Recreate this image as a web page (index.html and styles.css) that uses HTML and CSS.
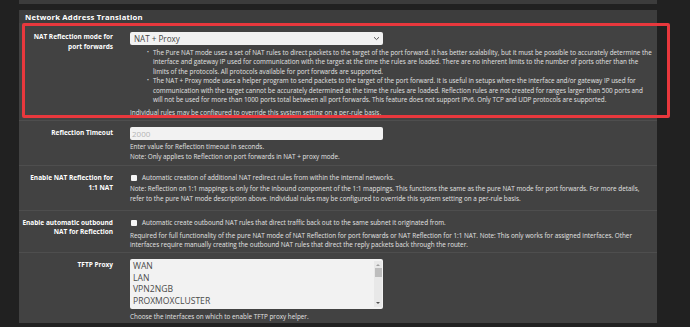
FILE: index.html
```html
<!DOCTYPE html>
<html lang="en">
<head>
    <meta charset="UTF-8">
    <title>Network Address Translation</title>
    <link rel="stylesheet" href="styles.css">
</head>
<body>
    <div class="page">
        <div class="panel panel-prev"></div>

        <div class="panel">
            <div class="panel-heading">Network Address Translation</div>
            <div class="panel-body">

                <div class="form-row row-reflection">
                    <div class="form-label">NAT Reflection mode for<br>port forwards</div>
                    <div class="form-field">
                        <div class="select">
                            <span>NAT + Proxy</span>
                            <svg class="chevron" width="7" height="5" viewBox="0 0 7 5"><path d="M1 1.2 L3.5 3.6 L6 1.2" fill="none" stroke="#555" stroke-width="1"/></svg>
                        </div>
                        <ul class="help-list">
                            <li>The Pure NAT mode uses a set of NAT rules to direct packets to the target of the port forward. It has better scalability, but it must be possible to accurately determine the interface and gateway IP used for communication with the target at the time the rules are loaded. There are no inherent limits to the number of ports other than the<br>limits of the protocols. All protocols available for port forwards are supported.</li>
                            <li>The NAT + Proxy mode uses a helper program to send packets to the target of the port forward. It is useful in setups where the interface and/or gateway IP used for communication with the target cannot be accurately determined at the time the rules are loaded. Reflection rules are not created for ranges larger than 500 ports and<br>will not be used for more than 1000 ports total between all port forwards. This feature does not support IPv6. Only TCP and UDP protocols are supported.</li>
                        </ul>
                        <div class="help help-last">Individual rules may be configured to override this system setting on a per-rule basis.</div>
                    </div>
                    <div class="annotation"></div>
                </div>

                <div class="form-row row-timeout">
                    <div class="form-label">Reflection Timeout</div>
                    <div class="form-field">
                        <div class="input placeholder">2000</div>
                        <div class="help">Enter value for Reflection timeout in seconds.<br>Note: Only applies to Reflection on port forwards in NAT + proxy mode.</div>
                    </div>
                </div>

                <div class="form-row row-onetoone">
                    <div class="form-label">Enable NAT Reflection for<br>1:1 NAT</div>
                    <div class="form-field">
                        <div class="check"><span class="box"></span>Automatic creation of additional NAT redirect rules from within the internal networks.</div>
                        <div class="help">Note: Reflection on 1:1 mappings is only for the inbound component of the 1:1 mappings. This functions the same as the pure NAT mode for port forwards. For more details, refer to the pure NAT mode description above. Individual rules may be configured to override this system setting on a per-rule basis.</div>
                    </div>
                </div>

                <div class="form-row row-outbound">
                    <div class="form-label">Enable automatic outbound<br>NAT for Reflection</div>
                    <div class="form-field">
                        <div class="check"><span class="box"></span>Automatic create outbound NAT rules that direct traffic back out to the same subnet it originated from.</div>
                        <div class="help">Required for full functionality of the pure NAT mode of NAT Reflection for port forwards or NAT Reflection for 1:1 NAT. Note: This only works for assigned interfaces. Other interfaces require manually creating the outbound NAT rules that direct the reply packets back through the router.</div>
                    </div>
                </div>

                <div class="form-row row-tftp">
                    <div class="form-label">TFTP Proxy</div>
                    <div class="form-field">
                        <div class="listbox">
                            <div class="options">
                                <div>WAN</div>
                                <div>LAN</div>
                                <div>VPN2NGB</div>
                                <div>PROXMOXCLUSTER</div>
                            </div>
                            <div class="scrollbar">
                                <span class="arrow up"></span>
                                <span class="thumb"></span>
                                <span class="arrow down"></span>
                            </div>
                        </div>
                        <div class="help">Choose the interfaces on which to enable TFTP proxy helper.</div>
                    </div>
                </div>

            </div>
        </div>
    </div>
</body>
</html>
```

FILE: styles.css
```css
* {
    box-sizing: border-box;
}
body {
    margin: 0;
    background-color: #212121;
    font-family: 'Open Sans', 'Noto Sans', sans-serif;
    color: #e2e2e2;
    width: 690px;
    height: 327px;
    overflow: hidden;
}
.page {
    margin-left: 19px;
    width: 638px;
}
.panel {
    background-color: #424242;
}
.panel-prev {
    height: 4px;
    background-color: #3c3c3c;
    margin-bottom: 6px;
}
.panel-heading {
    height: 13px;
    padding: 0 6px;
    background-color: #3d3d3d;
    color: #ffffff;
    font-weight: 700;
    font-size: 7.7px;
    line-height: 14px;
    letter-spacing: 0.2px;
}
.form-row {
    display: grid;
    grid-template-columns: 94px 1fr;
    column-gap: 17px;
    border-top: 1px solid #4e4e4e;
}
.row-reflection {
    position: relative;
    border-top: none;
    height: 97px;
    padding-top: 9px;
}
.row-timeout {
    height: 45px;
    padding-top: 6px;
}
.row-onetoone {
    height: 45px;
    padding-top: 7px;
}
.row-outbound {
    height: 42px;
    padding-top: 7px;
}
.row-tftp {
    height: 71px;
    padding-top: 6px;
}
.form-label {
    text-align: right;
    color: #ffffff;
    font-weight: 700;
    font-size: 6.5px;
    line-height: 10px;
}
.row-reflection .form-label {
    margin-top: 0;
}
.row-timeout .form-label,
.row-tftp .form-label {
    margin-top: 1px;
}
.row-outbound .form-label {
    line-height: 9px;
}
.form-field {
    width: 525px;
    font-size: 6.35px;
    line-height: 9.4px;
}
.select,
.input {
    width: 253px;
    height: 13px;
    background-color: #f2f2f2;
    border-radius: 2px;
    padding: 0 4px;
    font-size: 8.1px;
    line-height: 13px;
    color: #444;
    display: flex;
    justify-content: space-between;
    align-items: center;
}
.input {
    padding-left: 2px;
    font-size: 8px;
}
.chevron {
    margin-right: -1px;
}
.placeholder {
    color: #b4b4b4;
}
.help-list {
    margin: 3px 0 0;
    padding-left: 23px;
}
.help-list li {
    list-style: none;
}
.help-list li::before {
    content: "\2022";
    display: inline-block;
    width: 6px;
    margin-left: -6px;
    font-size: 5px;
    vertical-align: 1px;
}
.help-last {
    margin-top: 4px;
}
.row-timeout .help {
    margin-top: 2px;
    line-height: 10px;
}
.check {
    display: flex;
    align-items: center;
    line-height: 10px;
}
.check .box {
    width: 6px;
    height: 6px;
    background-color: #f5f5f5;
    border-radius: 1px;
    margin: 0 5px 0 1px;
}
.row-onetoone .help {
    margin-top: 1px;
    line-height: 10px;
}
.row-outbound .help {
    margin-top: 3px;
    line-height: 9.3px;
}
.listbox {
    width: 253px;
    height: 50px;
    background-color: #f2f2f2;
    border-radius: 2px;
    display: flex;
    justify-content: space-between;
    padding: 2px 1px 2px 3px;
}
.options {
    font-size: 8.6px;
    line-height: 11.5px;
    color: #4a4a4a;
}
.scrollbar {
    width: 8px;
    background-color: #e8e8e8;
    display: flex;
    flex-direction: column;
    align-items: center;
    padding: 1px 0;
}
.scrollbar .thumb {
    width: 7px;
    height: 9px;
    background-color: #bdbdbd;
    margin-top: 2px;
}
.scrollbar .arrow {
    width: 0;
    height: 0;
    border-left: 2px solid transparent;
    border-right: 2px solid transparent;
}
.scrollbar .up {
    border-bottom: 2px solid #a0a0a0;
    margin-top: 2px;
}
.scrollbar .down {
    border-top: 2px solid #505050;
    margin-top: auto;
    margin-bottom: 2px;
}
.row-tftp .help {
    margin-top: 3px;
}
.annotation {
    position: absolute;
    left: 3px;
    right: -13px;
    top: 0;
    bottom: 2px;
    border: 3px solid #e8383d;
    border-radius: 2px;
    pointer-events: none;
}
```
